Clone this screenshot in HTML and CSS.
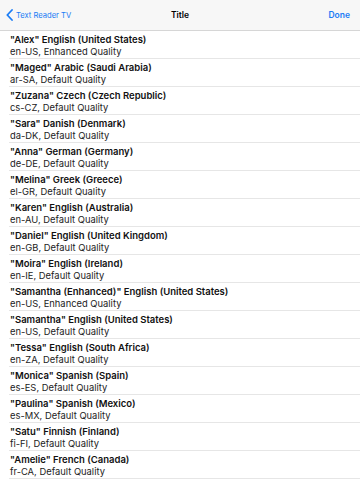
FILE: index.html
```html
<!DOCTYPE html>
<html>

<head>
  <title>Voices</title>
  <link rel="stylesheet" href="styles.css">
</head>

<body>

  <div class="navbar">
    <a href="#" class="nav-back">
      <svg class="chevron" width="7" height="12" viewBox="0 0 7 12">
        <path d="M6 1 L1.3 6 L6 11" fill="none" stroke="#1a7cf5" stroke-width="1.8" stroke-linecap="round" stroke-linejoin="round"/>
      </svg>
      <span>Text Reader TV</span>
    </a>
    <h1 class="navbar-title">Title</h1>
    <a href="#" class="nav-done">Done</a>
  </div>

  <ul class="voice-list">
    <li class="voice-row">
      <div class="voice-name">"Alex" English (United States)</div>
      <div class="voice-info">en-US, Enhanced Quality</div>
    </li>
    <li class="voice-row">
      <div class="voice-name">"Maged" Arabic (Saudi Arabia)</div>
      <div class="voice-info">ar-SA, Default Quality</div>
    </li>
    <li class="voice-row">
      <div class="voice-name">"Zuzana" Czech (Czech Republic)</div>
      <div class="voice-info">cs-CZ, Default Quality</div>
    </li>
    <li class="voice-row">
      <div class="voice-name">"Sara" Danish (Denmark)</div>
      <div class="voice-info">da-DK, Default Quality</div>
    </li>
    <li class="voice-row">
      <div class="voice-name">"Anna" German (Germany)</div>
      <div class="voice-info">de-DE, Default Quality</div>
    </li>
    <li class="voice-row">
      <div class="voice-name">"Melina" Greek (Greece)</div>
      <div class="voice-info">el-GR, Default Quality</div>
    </li>
    <li class="voice-row">
      <div class="voice-name">"Karen" English (Australia)</div>
      <div class="voice-info">en-AU, Default Quality</div>
    </li>
    <li class="voice-row">
      <div class="voice-name">"Daniel" English (United Kingdom)</div>
      <div class="voice-info">en-GB, Default Quality</div>
    </li>
    <li class="voice-row">
      <div class="voice-name">"Moira" English (Ireland)</div>
      <div class="voice-info">en-IE, Default Quality</div>
    </li>
    <li class="voice-row">
      <div class="voice-name">"Samantha (Enhanced)" English (United States)</div>
      <div class="voice-info">en-US, Enhanced Quality</div>
    </li>
    <li class="voice-row">
      <div class="voice-name">"Samantha" English (United States)</div>
      <div class="voice-info">en-US, Default Quality</div>
    </li>
    <li class="voice-row">
      <div class="voice-name">"Tessa" English (South Africa)</div>
      <div class="voice-info">en-ZA, Default Quality</div>
    </li>
    <li class="voice-row">
      <div class="voice-name">"Monica" Spanish (Spain)</div>
      <div class="voice-info">es-ES, Default Quality</div>
    </li>
    <li class="voice-row">
      <div class="voice-name">"Paulina" Spanish (Mexico)</div>
      <div class="voice-info">es-MX, Default Quality</div>
    </li>
    <li class="voice-row">
      <div class="voice-name">"Satu" Finnish (Finland)</div>
      <div class="voice-info">fi-FI, Default Quality</div>
    </li>
    <li class="voice-row">
      <div class="voice-name">"Amelie" French (Canada)</div>
      <div class="voice-info">fr-CA, Default Quality</div>
    </li>
  </ul>

</body>

</html>
```

FILE: styles.css
```css
body {
  font-family: Inter, "Liberation Sans", sans-serif;
  margin: 0;
  padding: 0;
  background-color: #fff;
  color: #000;
  overflow: hidden;
}

/* navigation bar */
.navbar {
  height: 30px;
  background-color: #f7f7f7;
  border-bottom: 1px solid #d6d6d6;
  display: flex;
  align-items: center;
  justify-content: space-between;
  padding: 0 10px 0 6px;
  position: relative;
}

.navbar a {
  color: #1a7cf5;
  text-decoration: none;
  font-size: 8.5px;
}

.nav-back {
  display: flex;
  align-items: center;
  gap: 3px;
}

.nav-back span {
  font-size: 7.6px;
}

.chevron {
  display: block;
}

.navbar-title {
  position: absolute;
  left: 0;
  right: 0;
  margin: 0;
  text-align: center;
  font-size: 8.5px;
  font-weight: 600;
  pointer-events: none;
}

.nav-done {
  font-weight: 600;
}

/* voice list */
.voice-list {
  list-style: none;
  margin: 0;
  padding: 0;
}

.voice-row {
  height: 25px;
  padding: 2px 0 0 1px;
  margin-left: 9px;
  border-bottom: 1px solid #e6e6e6;
  display: flex;
  flex-direction: column;
  justify-content: center;
}

.voice-name {
  font-size: 9.5px;
  font-weight: 600;
  line-height: 12px;
  color: #111;
}

.voice-info {
  font-size: 9.4px;
  line-height: 12px;
  color: #222;
}
```
